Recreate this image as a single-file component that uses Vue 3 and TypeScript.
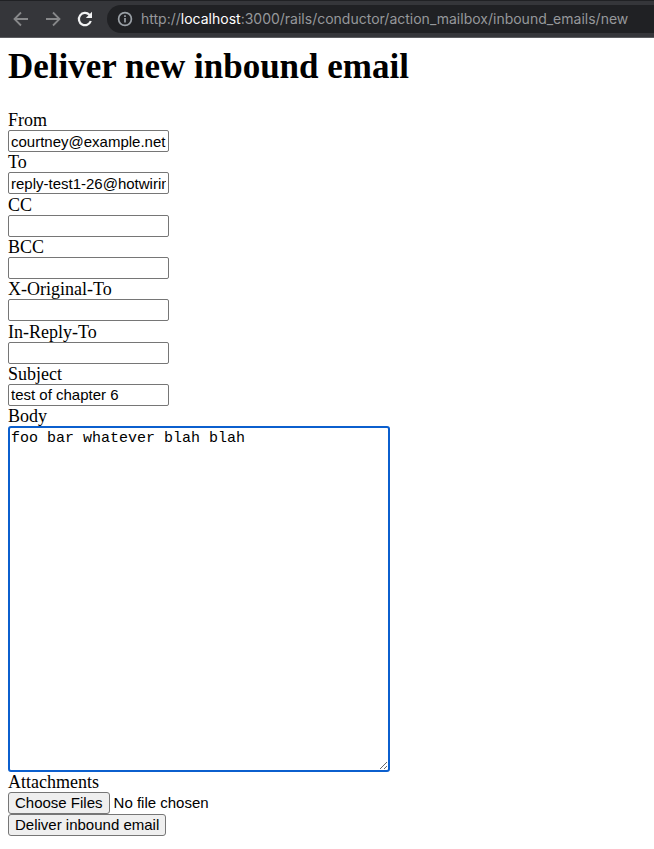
<script setup lang="ts">
import { reactive } from 'vue'

interface Field {
  id: string
  label: string
  value: string
}

const fields = reactive<Field[]>([
  { id: 'mail_from', label: 'From', value: 'courtney@example.net' },
  { id: 'mail_to', label: 'To', value: 'reply-test1-26@hotwiring' },
  { id: 'mail_cc', label: 'CC', value: '' },
  { id: 'mail_bcc', label: 'BCC', value: '' },
  { id: 'mail_x_original_to', label: 'X-Original-To', value: '' },
  { id: 'mail_in_reply_to', label: 'In-Reply-To', value: '' },
  { id: 'mail_subject', label: 'Subject', value: 'test of chapter 6' },
])

const message = reactive({ body: 'foo bar whatever blah blah' })
</script>

<template>
  <header class="toolbar">
    <button class="nav" type="button" aria-label="Back">
      <svg viewBox="0 0 16 16" width="16" height="16">
        <path d="M15 8H2M8 1.5 1.5 8 8 14.5" />
      </svg>
    </button>
    <button class="nav" type="button" aria-label="Forward">
      <svg viewBox="0 0 16 16" width="16" height="16">
        <path d="M1 8h13M8 1.5 14.5 8 8 14.5" />
      </svg>
    </button>
    <button class="nav reload" type="button" aria-label="Reload">
      <svg viewBox="0 0 16 16" width="16" height="16">
        <path d="M13.8 10A6.1 6.1 0 1 1 12.4 3.8L13.6 5" />
        <path class="solid" d="M15 .8V7H8.8Z" />
      </svg>
    </button>
    <div class="address">
      <svg class="info" viewBox="0 0 16 16" width="16" height="16">
        <circle cx="8" cy="8" r="6.4" />
        <path d="M8 7v4.6M8 4.2v1.8" />
      </svg>
      <span class="url">http://<span class="host">localhost</span>:3000/rails/conductor/action_mailbox/inbound_emails/new</span>
    </div>
  </header>

  <main class="page">
    <h1>Deliver new inbound email</h1>
    <form @submit.prevent>
      <div class="fields">
        <div v-for="field in fields" :key="field.id" class="field">
          <label :for="field.id">{{ field.label }}</label>
          <input :id="field.id" v-model="field.value" class="text" type="text" />
        </div>
      </div>
      <div class="field">
        <label for="mail_body">Body</label>
        <textarea id="mail_body" v-model="message.body" spellcheck="false"></textarea>
      </div>
      <div class="field">
        <label for="mail_attachments">Attachments</label>
        <input id="mail_attachments" class="files" type="file" multiple />
      </div>
      <button class="submit" type="submit">Deliver inbound email</button>
    </form>
  </main>
</template>

<style>
body {
  margin: 0;
  background: #fff;
}
</style>

<style scoped>
.toolbar {
  box-sizing: border-box;
  display: flex;
  align-items: center;
  gap: 16px;
  height: 38px;
  padding: 4px 0 4px 13px;
  overflow: hidden;
  background: #35363a;
  border-top: 1px solid #202124;
  border-bottom: 1px solid #5b5c60;
}

.nav {
  display: flex;
  flex: none;
  padding: 0;
  border: 0;
  background: none;
  color: #87888a;
}

.nav svg {
  fill: none;
  stroke: currentColor;
  stroke-width: 1.8;
}

.nav.reload {
  color: #f1f2f3;
}

.nav.reload svg {
  stroke-width: 2.2;
}

.nav .solid {
  fill: currentColor;
  stroke: none;
}

.address {
  display: flex;
  flex: 1;
  align-items: center;
  gap: 8px;
  height: 28px;
  margin-left: -2px;
  padding-left: 10px;
  border-radius: 14px 0 0 14px;
  background: #202124;
}

.info {
  flex: none;
  fill: none;
  stroke: #9aa0a6;
  stroke-width: 1.7;
}

.url {
  color: #96989b;
  font: 14px/20px Inter, Roboto, sans-serif;
  white-space: nowrap;
}

.host {
  color: #fff;
}

.page {
  padding: 9px 8px 8px;
  color: #000;
  font: 18px/20px "Liberation Serif", serif;
}

h1 {
  margin: 0 0 23px;
  font-size: 35px;
  line-height: 40px;
}

.fields {
  display: flex;
  flex-direction: column;
  justify-content: space-between;
  min-height: 296px;
}

.field {
  display: flex;
  flex-direction: column;
  align-items: flex-start;
}

.text,
.files,
.submit {
  box-sizing: border-box;
  height: 22px;
  margin: 0;
  color: #000;
  font: 15px/18px "Liberation Sans", Arial, sans-serif;
}

.text {
  width: 161px;
  padding: 0 2px;
  border: 1px solid #767676;
  border-radius: 2px;
  background: #fff;
}

textarea {
  box-sizing: border-box;
  width: 382px;
  max-width: 100%;
  height: 346px;
  margin: 0;
  padding: 3px 1px;
  border: 2px solid #0b5fce;
  border-radius: 3px;
  outline: none;
  background: #fff;
  color: #000;
  font: 15px/16px "Liberation Mono", "Courier New", monospace;
  resize: both;
}

.files::file-selector-button,
.submit {
  box-sizing: border-box;
  height: 22px;
  padding: 0 6px;
  border: 1px solid #767676;
  border-radius: 3px;
  background: #efefef;
  color: #000;
  font: 15px/18px "Liberation Sans", Arial, sans-serif;
}

.files::file-selector-button {
  margin-right: 4px;
}

.submit {
  display: block;
}
</style>
